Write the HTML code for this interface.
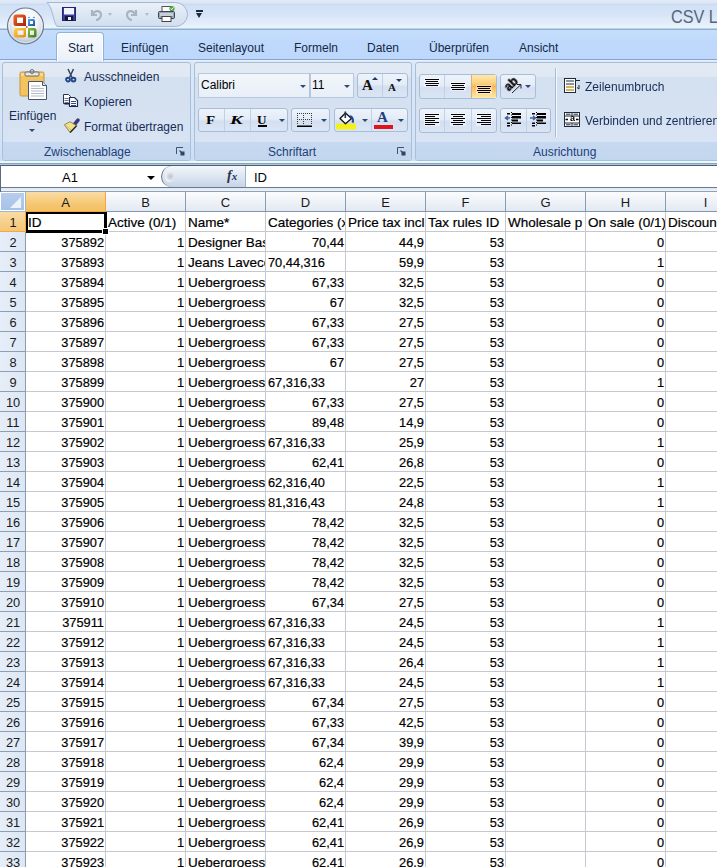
<!DOCTYPE html><html><head><meta charset="utf-8"><style>
*{margin:0;padding:0;box-sizing:border-box}
html,body{width:717px;height:867px;overflow:hidden;background:#fff;font-family:"Liberation Sans",sans-serif;}
.a{position:absolute}
svg{position:absolute;overflow:visible}
.t{position:absolute;white-space:nowrap;font-size:12px;line-height:14px;color:#172c56}
.grp{position:absolute;top:62px;height:99px;border:1px solid #a9bfd9;border-radius:3px;background:linear-gradient(#e2eaf5 0%,#dfe8f3 14%,#d3e0f0 15%,#d6e2f2 60%,#dae6f4 100%)}
.glab{position:absolute;left:0;right:0;bottom:0;height:18px;background:linear-gradient(#c6d9f0,#c2d6ee);border-radius:0 0 2px 2px;text-align:left;font-size:12px;line-height:14px;color:#22407a}
.btn{position:absolute;border:1px solid #a9bdd8;border-radius:3px;background:linear-gradient(#edf3fa 0%,#e4ecf7 45%,#d4e0f1 55%,#dae5f4 100%)}
.dv{position:absolute;width:1px;background:#c0d0e6}
.combo{position:absolute;border:1px solid #b8c9df;background:linear-gradient(#f2f6fb,#e9eff8);}
.cell{position:absolute;height:19px;font-size:13px;line-height:21px;color:#000;white-space:nowrap;overflow:hidden;-webkit-text-stroke:0.2px #000}
.ch{position:absolute;top:192px;height:20px;border-right:1px solid #8b9bb0;border-bottom:1px solid #8696aa;background:linear-gradient(#fbfcfe 0%,#eef2f8 50%,#e3e9f2 100%);text-align:center;font-size:13px;line-height:21px;color:#1a1a1a}
.rh{position:absolute;left:0;width:26px;height:20px;border-right:1px solid #8b9bb0;border-bottom:1px solid #8f9fb3;background:linear-gradient(90deg,#e6eef9,#dde7f4);text-align:center;font-size:12.8px;line-height:22px;color:#1a1a1a;padding-left:1px}
.arr{position:absolute;width:0;height:0;border-left:3px solid transparent;border-right:3px solid transparent;border-top:3px solid #2b4a78}
</style></head><body>
<div class="a" style="left:0;top:0;width:717px;height:30px;background:linear-gradient(#e1eaf7 0px,#dbe6f6 3px,#ccdbf0 4.5px,#d2e1f6 6px,#d8e5f8 16px,#dde9f9 18px,#e3eefb 24px,#e8f4fd 26px,#e9f5fd 28px,#8fafca 29px)"></div>
<div class="t" style="left:671px;top:6px;font-size:18px;line-height:22px;color:#56657a;transform:scaleX(0.9);transform-origin:0 0">CSV L</div>
<svg style="left:0;top:0" width="200" height="30" viewBox="0 0 200 30">
<defs><linearGradient id="qg" x1="0" y1="0" x2="0" y2="1"><stop offset="0" stop-color="#eaf0f8"/><stop offset="0.5" stop-color="#dde7f3"/><stop offset="1" stop-color="#d1deef"/></linearGradient></defs>
<path d="M47 2.5 H175.5 A12 12 0 0 1 175.5 26.5 H57 C53 22, 53 8, 47 2.5z" fill="url(#qg)" stroke="#a3b8d3" stroke-width="1"/>
</svg>
<svg style="left:62px;top:7px" width="14" height="14" viewBox="0 0 14 14">
<rect x="0" y="0" width="14" height="14" fill="#3b3d9c"/><rect x="0.5" y="0.5" width="13" height="13" fill="none" stroke="#23256e"/>
<rect x="2" y="1" width="10" height="6.5" fill="#f2f4fb"/>
<rect x="3" y="9" width="8" height="5" fill="#15163a"/><rect x="6" y="10" width="3" height="3" fill="#e8ecf5"/>
</svg>
<svg style="left:90px;top:8px" width="14" height="13" viewBox="0 0 14 13">
<path d="M2 2 L2 7 L7 7" fill="none" stroke="#a8b4c4" stroke-width="2.2"/>
<path d="M3 6 C5 2, 11 2, 11 7 C11 10, 8 12, 6 12" fill="none" stroke="#a8b4c4" stroke-width="2.2"/>
</svg>
<div class="arr" style="left:108px;top:13px;border-top-color:#b0bccb;border-width:3px 2px 0 2px"></div>
<svg style="left:124px;top:8px" width="14" height="13" viewBox="0 0 14 13">
<path d="M12 2 L12 7 L7 7" fill="none" stroke="#a8b4c4" stroke-width="2.2"/>
<path d="M11 6 C9 2, 3 2, 3 7 C3 10, 6 12, 8 12" fill="none" stroke="#a8b4c4" stroke-width="2.2"/>
</svg>
<div class="arr" style="left:145px;top:13px;border-top-color:#b0bccb;border-width:3px 2px 0 2px"></div>
<svg style="left:158px;top:6px" width="18" height="16" viewBox="0 0 18 16">
<rect x="4" y="0.5" width="9" height="6" fill="#fff" stroke="#555"/>
<rect x="0.5" y="5.5" width="16" height="7" rx="1" fill="#9aa6b6" stroke="#3c4655"/>
<rect x="2" y="7" width="13" height="3" fill="#c8ced9"/>
<rect x="4" y="10.5" width="9" height="5" fill="#fff" stroke="#444"/>
<circle cx="14" cy="2.5" r="2.6" fill="#4aa83a"/><path d="M12.6 2.6 L13.7 3.6 L15.5 1.4" stroke="#fff" stroke-width="1" fill="none"/>
</svg>
<div class="a" style="left:196px;top:10px;width:7px;height:2px;background:#1c2a44"></div>
<div class="arr" style="left:196px;top:13px;border-width:5px 3.5px 0 3.5px;border-top-color:#1c2a44"></div>
<div class="a" style="left:0;top:30px;width:717px;height:30px;background:linear-gradient(#c6defc,#bfd9fc 40%,#bdd8fc);border-bottom:1px solid #87a5c6"></div>
<div class="a" style="left:0;top:60px;width:717px;height:1px;background:#e8f0fa"></div>
<div class="a" style="left:56px;top:32px;width:48px;height:29px;border:1px solid #94b2d6;border-bottom:none;border-radius:4px 4px 0 0;background:linear-gradient(#f7fafe,#f1f5fb 60%,#eaf0f8);box-shadow:inset 1px 1px 0 #ffffff,inset -1px 0 0 #ffffff;z-index:2"></div>
<div class="t" style="left:68px;top:41px;z-index:3;color:#142848">Start</div>
<div class="t" style="left:121px;top:41px;z-index:3;color:#142848">Einfügen</div>
<div class="t" style="left:198px;top:41px;z-index:3;color:#142848">Seitenlayout</div>
<div class="t" style="left:294px;top:41px;z-index:3;color:#142848">Formeln</div>
<div class="t" style="left:367px;top:41px;z-index:3;color:#142848">Daten</div>
<div class="t" style="left:429px;top:41px;z-index:3;color:#142848">Überprüfen</div>
<div class="t" style="left:519px;top:41px;z-index:3;color:#142848">Ansicht</div>
<svg style="left:0;top:0;z-index:5" width="50" height="50" viewBox="0 0 50 50">
<defs>
<radialGradient id="ob" cx="50%" cy="35%" r="65%"><stop offset="0" stop-color="#ffffff"/><stop offset="0.5" stop-color="#f3f5f8"/><stop offset="0.75" stop-color="#d9dee6"/><stop offset="1" stop-color="#aeb8c6"/></radialGradient>
<linearGradient id="lr" x1="0" y1="0" x2="1" y2="1"><stop offset="0" stop-color="#f26a22"/><stop offset="1" stop-color="#a81c0c"/></linearGradient>
<linearGradient id="ly" x1="0" y1="0" x2="1" y2="1"><stop offset="0" stop-color="#ffd24a"/><stop offset="1" stop-color="#e08a10"/></linearGradient>
<linearGradient id="lg" x1="0" y1="0" x2="1" y2="1"><stop offset="0" stop-color="#8cc43a"/><stop offset="1" stop-color="#3a7a1a"/></linearGradient>
<linearGradient id="lb" x1="0" y1="0" x2="1" y2="1"><stop offset="0" stop-color="#5aa8e8"/><stop offset="1" stop-color="#1a4a98"/></linearGradient>
</defs>
<circle cx="25.5" cy="26" r="18" fill="url(#ob)" stroke="#6a7a90" stroke-width="1.1"/>
<circle cx="25.5" cy="26" r="16.5" fill="none" stroke="#ffffff" stroke-width="0.8" opacity="0.7"/>
<path d="M16 14.5 h7 a3 3 0 0 1 3 3 v8.5 h-10 a2.5 2.5 0 0 1 -2.5 -2.5 v-6.5 a2.5 2.5 0 0 1 2.5 -2.5z M17 17.5 v5.5 h6 v-5.5z" fill="url(#lr)" fill-rule="evenodd"/>
<path d="M28 19 h5 a2 2 0 0 1 2 2 v5 h-7z M30 21 v3 h3 v-3z" fill="url(#lb)" fill-rule="evenodd"/>
<path d="M16.5 28 h9.5 v7 a2.5 2.5 0 0 1 -2.5 2.5 h-7 a2.5 2.5 0 0 1 -2.5 -2.5 v-4.5 a2.5 2.5 0 0 1 2.5 -2.5z M17.5 30.5 v4.5 h6 v-4.5z" fill="url(#ly)" fill-rule="evenodd"/>
<path d="M28 28 h6 a2.5 2.5 0 0 1 2.5 2.5 v4.5 a2.5 2.5 0 0 1 -2.5 2.5 h-6z M30 30.5 v4.5 h4 v-4.5z" fill="url(#lg)" fill-rule="evenodd"/>
<circle cx="26.8" cy="27" r="0.9" fill="#c04a20"/><circle cx="29" cy="17.5" r="0.8" fill="#3a7ac0"/><circle cx="34" cy="17.5" r="0.8" fill="#3a7ac0"/>
</svg>
<div class="a" style="left:0;top:61px;width:717px;height:105px;background:linear-gradient(#dbe8f8,#d3e3f6 80%,#c9dcf3)"></div>
<div class="a" style="left:0;top:161px;width:717px;height:2px;background:#e9f9fd"></div>
<div class="a" style="left:0;top:163px;width:717px;height:1px;background:#86a3ba"></div><div class="a" style="left:0;top:164px;width:717px;height:1px;background:#abc6de"></div>
<div class="grp" style="left:2px;width:189px"><div class="glab" style="padding:3px 0 0 41px">Zwischenablage</div></div>
<div class="grp" style="left:194px;width:218px"><div class="glab" style="padding:3px 0 0 73px">Schriftart</div></div>
<div class="grp" style="left:415px;width:310px"><div class="glab" style="padding:3px 0 0 117px">Ausrichtung</div></div>
<svg style="left:176px;top:147px" width="9" height="9" viewBox="0 0 9 9">
<path d="M0.5 7 V0.5 H7" fill="none" stroke="#3f5472" stroke-width="1"/>
<path d="M3.5 3.5 L7 7" stroke="#3f5472" stroke-width="1.2"/>
<rect x="4.5" y="4.5" width="4" height="4" fill="#2f4563"/></svg>
<svg style="left:397px;top:147px" width="9" height="9" viewBox="0 0 9 9">
<path d="M0.5 7 V0.5 H7" fill="none" stroke="#3f5472" stroke-width="1"/>
<path d="M3.5 3.5 L7 7" stroke="#3f5472" stroke-width="1.2"/>
<rect x="4.5" y="4.5" width="4" height="4" fill="#2f4563"/></svg>
<svg style="left:19px;top:69px" width="30" height="32" viewBox="0 0 30 32">
<rect x="1" y="3" width="24" height="24" rx="1.5" fill="#f2c35e" stroke="#c8953a"/>
<rect x="2" y="4" width="22" height="3" fill="#f8d990"/>
<rect x="6" y="3" width="14" height="4" rx="1" fill="#e8e8e8" stroke="#6b6b6b"/>
<circle cx="13" cy="2.5" r="2" fill="none" stroke="#6b6b6b"/>
<path d="M9.5 12.5 H23.5 L27.5 16.5 V30.5 H9.5z" fill="#fff" stroke="#46566e"/>
<path d="M23.5 12.5 V16.5 H27.5" fill="#dde3ec" stroke="#46566e"/>
<path d="M12 17 H21 M12 19.5 H25 M12 22 H25 M12 24.5 H25 M12 27 H25" stroke="#b0bac8" stroke-width="1"/>
</svg>
<div class="t" style="left:9px;top:109px">Einfügen</div>
<div class="arr" style="left:29px;top:129px;border-width:3px 3px 0 3px"></div>
<svg style="left:65px;top:68px" width="12" height="15" viewBox="0 0 12 15">
<path d="M3 1 L7 9.5 M8.5 1 L4.5 9.5" stroke="#34435e" stroke-width="1.5" fill="none"/>
<circle cx="3" cy="11.6" r="1.9" fill="none" stroke="#24448a" stroke-width="1.9"/>
<circle cx="8.5" cy="11.6" r="1.9" fill="none" stroke="#24448a" stroke-width="1.9"/>
</svg>
<div class="t" style="left:84px;top:70px">Ausschneiden</div>
<svg style="left:63px;top:94px" width="16" height="14" viewBox="0 0 16 14">
<path d="M0.5 0.5 H5.5 L7.5 2.5 V9.5 H0.5z" fill="#fff" stroke="#2a3550" stroke-width="1"/>
<path d="M1.5 10 H8" stroke="#111" stroke-width="1"/>
<rect x="1.5" y="4" width="4" height="1" fill="#6a7896"/><rect x="1.5" y="6" width="4" height="1" fill="#6a7896"/><rect x="1.5" y="8" width="4" height="1" fill="#6a7896"/>
<path d="M6.5 3.5 H11.5 L14.5 6.5 V12.5 H6.5z" fill="#fff" stroke="#1c2a5a" stroke-width="1.2"/>
<rect x="8" y="7" width="5" height="1" fill="#3c4c78"/><rect x="8" y="9" width="5" height="1" fill="#3c4c78"/><rect x="8" y="11" width="5" height="1" fill="#3c4c78"/>
</svg>
<div class="t" style="left:84px;top:95px">Kopieren</div>
<svg style="left:63px;top:118px" width="16" height="16" viewBox="0 0 16 16">
<path d="M11.4 6.5 L15 2.2" stroke="#3d3a7a" stroke-width="3.6" stroke-linecap="round"/>
<path d="M1.3 6.8 L7.1 3.7 L13.6 7.7 L7.1 14.5z" fill="#f1e08c" stroke="#807040" stroke-width="0.8"/>
<path d="M13.6 7.7 L7.1 14.5" stroke="#2a2a20" stroke-width="1.4"/>
<path d="M3 7.5 L8 12" stroke="#d8c060" stroke-width="1"/>
</svg>
<div class="t" style="left:84px;top:120px">Format übertragen</div>
<div class="combo" style="left:198px;top:73px;width:112px;height:25px"></div>
<div class="t" style="left:201px;top:78px;color:#000">Calibri</div>
<div class="arr" style="left:300px;top:85px"></div>
<div class="a" style="left:309px;top:73px;width:2px;height:25px;background:#b3c4da"></div>
<div class="combo" style="left:310px;top:73px;width:44px;height:25px"></div>
<div class="t" style="left:312px;top:78px;color:#000">11</div>
<div class="arr" style="left:344px;top:85px"></div>
<div class="btn" style="left:357px;top:73px;width:51px;height:25px"></div><div class="dv" style="left:382px;top:74px;height:23px"></div>
<div class="t" style="left:362px;top:77px;font-family:'Liberation Serif',serif;font-weight:bold;font-size:15px;line-height:16px;color:#111">A</div>
<div class="arr" style="left:372px;top:77px;border-width:0 3px 3px 3px;border-top:none;border-bottom:3px solid #1d3a66"></div>
<div class="t" style="left:388px;top:81px;font-family:'Liberation Serif',serif;font-weight:bold;font-size:11px;line-height:12px;color:#111">A</div>
<div class="arr" style="left:396px;top:79px;border-width:3px 3px 0 3px;border-top-color:#1d3a66"></div>
<div class="btn" style="left:198px;top:108px;width:90px;height:24px"></div><div class="dv" style="left:224px;top:109px;height:22px"></div><div class="dv" style="left:250px;top:109px;height:22px"></div>
<div class="t" style="left:206px;top:113px;font-family:'Liberation Serif',serif;font-weight:bold;font-size:12px;line-height:12px;color:#000;transform:scale(1.25,1.08);transform-origin:0 0">F</div>
<div class="t" style="left:230px;top:113px;font-family:'Liberation Serif',serif;font-weight:bold;font-style:italic;font-size:12px;line-height:12px;color:#000;transform:scale(1.6,1.08);transform-origin:0 0">K</div>
<div class="t" style="left:257px;top:113px;font-family:'Liberation Serif',serif;font-weight:bold;font-size:12px;line-height:12px;color:#000;transform:scale(1.1,1.08);transform-origin:0 0">U</div>
<div class="a" style="left:258px;top:125px;width:9px;height:1.5px;background:#000"></div>
<div class="arr" style="left:279px;top:119px"></div>
<div class="btn" style="left:291px;top:108px;width:39px;height:24px"></div>
<svg style="left:297px;top:113px" width="15" height="15" viewBox="0 0 15 15">
<rect x="0" y="0" width="1" height="1" fill="#3a3a3a"/><rect x="0" y="2" width="1" height="1" fill="#3a3a3a"/><rect x="0" y="4" width="1" height="1" fill="#3a3a3a"/><rect x="0" y="6" width="1" height="1" fill="#3a3a3a"/><rect x="0" y="8" width="1" height="1" fill="#3a3a3a"/><rect x="0" y="10" width="1" height="1" fill="#3a3a3a"/><rect x="2" y="0" width="1" height="1" fill="#3a3a3a"/><rect x="2" y="6" width="1" height="1" fill="#3a3a3a"/><rect x="4" y="0" width="1" height="1" fill="#3a3a3a"/><rect x="4" y="6" width="1" height="1" fill="#3a3a3a"/><rect x="6" y="0" width="1" height="1" fill="#3a3a3a"/><rect x="6" y="2" width="1" height="1" fill="#3a3a3a"/><rect x="6" y="4" width="1" height="1" fill="#3a3a3a"/><rect x="6" y="6" width="1" height="1" fill="#3a3a3a"/><rect x="6" y="8" width="1" height="1" fill="#3a3a3a"/><rect x="6" y="10" width="1" height="1" fill="#3a3a3a"/><rect x="8" y="0" width="1" height="1" fill="#3a3a3a"/><rect x="8" y="6" width="1" height="1" fill="#3a3a3a"/><rect x="10" y="0" width="1" height="1" fill="#3a3a3a"/><rect x="10" y="6" width="1" height="1" fill="#3a3a3a"/><rect x="12" y="0" width="1" height="1" fill="#3a3a3a"/><rect x="12" y="6" width="1" height="1" fill="#3a3a3a"/><rect x="14" y="0" width="1" height="1" fill="#3a3a3a"/><rect x="14" y="2" width="1" height="1" fill="#3a3a3a"/><rect x="14" y="4" width="1" height="1" fill="#3a3a3a"/><rect x="14" y="6" width="1" height="1" fill="#3a3a3a"/><rect x="14" y="8" width="1" height="1" fill="#3a3a3a"/><rect x="14" y="10" width="1" height="1" fill="#3a3a3a"/>
<rect x="0" y="12.5" width="15" height="1.5" fill="#000"/></svg>
<div class="arr" style="left:321px;top:119px"></div>
<div class="btn" style="left:334px;top:108px;width:74px;height:24px"></div><div class="dv" style="left:371px;top:109px;height:22px"></div>
<svg style="left:336px;top:110px" width="22" height="20" viewBox="0 0 22 20">
<rect x="0" y="13.5" width="20" height="6" rx="1" fill="#f5f01c"/>
<path d="M4 8.5 L9.5 3 L15.5 8.5 L9.5 13.8z" fill="#fff" stroke="#111" stroke-width="1.3" stroke-linejoin="round"/>
<path d="M9.3 1.5 V8" stroke="#2a3340" stroke-width="1.6"/>
<path d="M13.8 5.2 C17.5 5.5, 18.8 9.5, 17.6 13.2 L15.6 12.2 C16.2 10, 16 8, 13.8 7.2z" fill="#1f4b9e"/>
</svg>
<div class="arr" style="left:362px;top:119px"></div>
<div class="t" style="left:377px;top:110px;font-family:'Liberation Serif',serif;font-weight:bold;font-size:15px;line-height:15px;color:#1d3f82">A</div>
<div class="a" style="left:374px;top:125px;width:19px;height:4px;background:#e1141a"></div>
<div class="arr" style="left:398px;top:119px"></div>
<div class="btn" style="left:419px;top:74px;width:78px;height:25px"></div>
<div class="a" style="left:471px;top:75px;width:25px;height:23px;background:linear-gradient(#fde9ad 0%,#fbd27e 35%,#f8b65a 50%,#fbd88a 80%,#fde9a8 100%)"></div>
<div class="dv" style="left:444px;top:75px;height:23px"></div><div class="dv" style="left:471px;top:75px;height:23px;background:#d6b27a"></div>
<div class="a" style="left:424px;top:78px;width:16px;height:9px;background:rgba(255,255,255,0.45)"></div>
<div class="a" style="left:425px;top:79px;width:14px;height:1px;background:#000"></div>
<div class="a" style="left:426px;top:81px;width:12px;height:1px;background:#000"></div>
<div class="a" style="left:425px;top:83px;width:14px;height:1px;background:#000"></div>
<div class="a" style="left:426px;top:85px;width:12px;height:1px;background:#000"></div>
<div class="a" style="left:450px;top:82px;width:16px;height:9px;background:rgba(255,255,255,0.45)"></div>
<div class="a" style="left:451px;top:83px;width:14px;height:1px;background:#000"></div>
<div class="a" style="left:452px;top:85px;width:12px;height:1px;background:#000"></div>
<div class="a" style="left:451px;top:87px;width:14px;height:1px;background:#000"></div>
<div class="a" style="left:452px;top:89px;width:12px;height:1px;background:#000"></div>
<div class="a" style="left:476px;top:85px;width:16px;height:9px;background:rgba(255,255,255,0.45)"></div>
<div class="a" style="left:477px;top:86px;width:14px;height:1px;background:#000"></div>
<div class="a" style="left:478px;top:88px;width:12px;height:1px;background:#000"></div>
<div class="a" style="left:477px;top:90px;width:14px;height:1px;background:#000"></div>
<div class="a" style="left:478px;top:92px;width:12px;height:1px;background:#000"></div>
<div class="btn" style="left:500px;top:74px;width:36px;height:25px"></div>
<div class="t" style="left:504px;top:78px;font-family:'Liberation Sans',sans-serif;font-weight:bold;font-size:12px;line-height:12px;color:#000;transform:rotate(-45deg) translateZ(0);transform-origin:50% 50%;-webkit-text-stroke:0.3px #000">ab</div>
<svg style="left:511px;top:83px" width="11" height="11" viewBox="0 0 11 11"><path d="M1 10 L10 1.5 M6 1.5 H10 V5.5" stroke="#222" stroke-width="1" fill="none"/></svg>
<div class="arr" style="left:525px;top:85px"></div>
<div class="btn" style="left:419px;top:108px;width:78px;height:25px"></div><div class="dv" style="left:444px;top:109px;height:23px"></div><div class="dv" style="left:471px;top:109px;height:23px"></div>
<div class="a" style="left:424px;top:113px;width:16px;height:13px;background:rgba(255,255,255,0.45)"></div>
<div class="a" style="left:425px;top:114px;width:14px;height:1px;background:#000"></div>
<div class="a" style="left:425px;top:116px;width:10px;height:1px;background:#000"></div>
<div class="a" style="left:425px;top:118px;width:14px;height:1px;background:#000"></div>
<div class="a" style="left:425px;top:120px;width:10px;height:1px;background:#000"></div>
<div class="a" style="left:425px;top:122px;width:14px;height:1px;background:#000"></div>
<div class="a" style="left:425px;top:124px;width:10px;height:1px;background:#000"></div>
<div class="a" style="left:450px;top:113px;width:16px;height:13px;background:rgba(255,255,255,0.45)"></div>
<div class="a" style="left:451px;top:114px;width:14px;height:1px;background:#000"></div>
<div class="a" style="left:453px;top:116px;width:10px;height:1px;background:#000"></div>
<div class="a" style="left:451px;top:118px;width:14px;height:1px;background:#000"></div>
<div class="a" style="left:453px;top:120px;width:10px;height:1px;background:#000"></div>
<div class="a" style="left:451px;top:122px;width:14px;height:1px;background:#000"></div>
<div class="a" style="left:453px;top:124px;width:10px;height:1px;background:#000"></div>
<div class="a" style="left:476px;top:113px;width:16px;height:13px;background:rgba(255,255,255,0.45)"></div>
<div class="a" style="left:477px;top:114px;width:14px;height:1px;background:#000"></div>
<div class="a" style="left:481px;top:116px;width:10px;height:1px;background:#000"></div>
<div class="a" style="left:477px;top:118px;width:14px;height:1px;background:#000"></div>
<div class="a" style="left:481px;top:120px;width:10px;height:1px;background:#000"></div>
<div class="a" style="left:477px;top:122px;width:14px;height:1px;background:#000"></div>
<div class="a" style="left:481px;top:124px;width:10px;height:1px;background:#000"></div>
<div class="btn" style="left:500px;top:108px;width:51px;height:25px"></div><div class="dv" style="left:526px;top:109px;height:23px"></div>
<svg style="left:505px;top:112px" width="16" height="15" viewBox="0 0 16 15">
<path d="M6.5 0 V15" stroke="#000" stroke-width="1" stroke-dasharray="1 1.5"/>
<rect x="7" y="1" width="9" height="2" fill="#000"/><rect x="7" y="4" width="9" height="2.5" fill="#000"/><rect x="7" y="7.5" width="6" height="2" fill="#000"/><rect x="7" y="10.5" width="9" height="1.5" fill="#000"/>
<rect x="2" y="1" width="3" height="1.5" fill="#000"/><rect x="2" y="10.5" width="3" height="1.5" fill="#000"/><rect x="2" y="13" width="3" height="1.5" fill="#000"/>
<path d="M5 6 H0.5 M3 4 L0.5 6 L3 8" stroke="#3d5fa8" stroke-width="1.5" fill="none"/>
</svg>
<svg style="left:530px;top:112px" width="16" height="15" viewBox="0 0 16 15">
<path d="M6.5 0 V15" stroke="#000" stroke-width="1" stroke-dasharray="1 1.5"/>
<rect x="7" y="1" width="9" height="2" fill="#000"/><rect x="7" y="4" width="9" height="2.5" fill="#000"/><rect x="7" y="7.5" width="6" height="2" fill="#000"/><rect x="7" y="10.5" width="9" height="1.5" fill="#000"/>
<rect x="2" y="1" width="3" height="1.5" fill="#000"/><rect x="2" y="10.5" width="3" height="1.5" fill="#000"/><rect x="2" y="13" width="3" height="1.5" fill="#000"/>
<path d="M0 6 H5 M3 4 L5.5 6 L3 8" stroke="#3d5fa8" stroke-width="1.5" fill="none"/>
</svg>
<div class="a" style="left:555px;top:68px;width:1px;height:69px;background:#a6bcd8"></div><div class="a" style="left:556px;top:68px;width:1px;height:69px;background:#f3f7fc"></div>
<svg style="left:564px;top:78px" width="17" height="16" viewBox="0 0 17 16">
<rect x="0.5" y="0.5" width="11" height="14" fill="#fffef8" stroke="#1f2a3a"/>
<path d="M2 3 H10 M2 6 H10" stroke="#1f2a3a" stroke-width="1"/>
<path d="M2 9 H10 M2 12 H10" stroke="#c49a3a" stroke-width="1.3"/>
<path d="M11 2.5 H16 M15 7 V11 L13 9.5" stroke="#1f2a3a" stroke-width="1" fill="none"/>
</svg>
<div class="t" style="left:585px;top:80px">Zeilenumbruch</div>
<svg style="left:564px;top:112px" width="16" height="15" viewBox="0 0 16 15">
<rect x="0.5" y="0.5" width="15" height="14" fill="#fff" stroke="#1f2a3a"/>
<path d="M0.5 4 H15.5 M0.5 11 H15.5 M8 0.5 V4 M8 11 V14.5 M2 2.2 H6.5 M9.5 2.2 H14 M2 12.8 H6.5 M9.5 12.8 H14" stroke="#1f2a3a" stroke-width="1"/>
<path d="M1.5 7.5 H4 M12 7.5 H14.5" stroke="#000" stroke-width="1.3"/>
</svg>
<div class="t" style="left:570px;top:113px;font-weight:bold;font-size:9px;line-height:10px;color:#000">a</div>
<div class="t" style="left:585px;top:114px">Verbinden und zentrieren</div>
<div class="a" style="left:0;top:165px;width:717px;height:1px;background:#4f5f72"></div>
<div class="a" style="left:0;top:166px;width:717px;height:21px;background:#fff"></div>
<div class="a" style="left:0;top:187px;width:717px;height:1px;background:#6d7a8c"></div>
<div class="a" style="left:0;top:188px;width:717px;height:3px;background:linear-gradient(#dfe7f2,#eef3f9)"></div>
<div class="a" style="left:0;top:191px;width:717px;height:1px;background:#8fa2b8"></div>
<div class="a" style="left:0;top:165px;width:1px;height:27px;background:#5a6b80"></div>
<div class="t" style="left:62px;top:170px;color:#000;font-size:13px;line-height:16px">A1</div>
<div class="arr" style="left:147px;top:176px;border-width:4px 4px 0 4px;border-top-color:#000"></div>
<div class="a" style="left:161px;top:166px;width:85px;height:21px;border-radius:11px 0 0 11px;background:linear-gradient(#f4f7fb 0%,#dfe7f3 45%,#c6d4e9 100%);border:1px solid #5f7089;border-right:1px solid #9fb2cb;border-top:none;border-bottom:none"></div>
<div class="a" style="left:165px;top:171px;width:9px;height:11px;border-radius:50%;background:radial-gradient(circle at 60% 50%,#b9c1cc,#f2f4f8 70%)"></div>
<div class="t" style="left:227px;top:169px;font-family:'Liberation Serif',serif;font-style:italic;font-weight:bold;font-size:14px;line-height:14px;color:#26344c">f<span style="font-size:11px;margin-left:0px">x</span></div>
<div class="t" style="left:254px;top:170px;color:#000;font-size:13px;line-height:16px">ID</div>
<div class="a" style="left:0;top:192px;width:26px;height:20px;background:#fff;border-right:1px solid #9eb6ce;border-bottom:1px solid #9eb6ce"></div>
<div class="a" style="left:1px;top:193px;width:23px;height:17px;background:linear-gradient(#b7cdee,#a6c1e8)"></div>
<svg style="left:9px;top:197px" width="13" height="12" viewBox="0 0 13 12"><path d="M12 0 V11 H1z" fill="#eef3fa"/></svg>
<div class="ch" style="left:26px;width:80px;background:linear-gradient(#f9dca6,#f6c874 60%,#f2bf62);border-right-color:#f2a83f;border-bottom-color:#f2a83f">A</div>
<div class="ch" style="left:106px;width:80px;">B</div>
<div class="ch" style="left:186px;width:80px;">C</div>
<div class="ch" style="left:266px;width:80px;">D</div>
<div class="ch" style="left:346px;width:80px;">E</div>
<div class="ch" style="left:426px;width:80px;">F</div>
<div class="ch" style="left:506px;width:80px;">G</div>
<div class="ch" style="left:586px;width:80px;">H</div>
<div class="ch" style="left:666px;width:80px;">I</div>
<div class="rh" style="top:212px;background:linear-gradient(#f9dca6,#f5c676);border-bottom-color:#f2a83f;border-right-color:#f2a83f">1</div>
<div class="rh" style="top:232px;">2</div>
<div class="rh" style="top:252px;">3</div>
<div class="rh" style="top:272px;">4</div>
<div class="rh" style="top:292px;">5</div>
<div class="rh" style="top:312px;">6</div>
<div class="rh" style="top:332px;">7</div>
<div class="rh" style="top:352px;">8</div>
<div class="rh" style="top:372px;">9</div>
<div class="rh" style="top:392px;">10</div>
<div class="rh" style="top:412px;">11</div>
<div class="rh" style="top:432px;">12</div>
<div class="rh" style="top:452px;">13</div>
<div class="rh" style="top:472px;">14</div>
<div class="rh" style="top:492px;">15</div>
<div class="rh" style="top:512px;">16</div>
<div class="rh" style="top:532px;">17</div>
<div class="rh" style="top:552px;">18</div>
<div class="rh" style="top:572px;">19</div>
<div class="rh" style="top:592px;">20</div>
<div class="rh" style="top:612px;">21</div>
<div class="rh" style="top:632px;">22</div>
<div class="rh" style="top:652px;">23</div>
<div class="rh" style="top:672px;">24</div>
<div class="rh" style="top:692px;">25</div>
<div class="rh" style="top:712px;">26</div>
<div class="rh" style="top:732px;">27</div>
<div class="rh" style="top:752px;">28</div>
<div class="rh" style="top:772px;">29</div>
<div class="rh" style="top:792px;">30</div>
<div class="rh" style="top:812px;">31</div>
<div class="rh" style="top:832px;">32</div>
<div class="rh" style="top:852px;">33</div>
<div class="a" style="left:26px;top:231px;width:691px;height:1px;background:#c5c8ce"></div>
<div class="a" style="left:26px;top:251px;width:691px;height:1px;background:#c5c8ce"></div>
<div class="a" style="left:26px;top:271px;width:691px;height:1px;background:#c5c8ce"></div>
<div class="a" style="left:26px;top:291px;width:691px;height:1px;background:#c5c8ce"></div>
<div class="a" style="left:26px;top:311px;width:691px;height:1px;background:#c5c8ce"></div>
<div class="a" style="left:26px;top:331px;width:691px;height:1px;background:#c5c8ce"></div>
<div class="a" style="left:26px;top:351px;width:691px;height:1px;background:#c5c8ce"></div>
<div class="a" style="left:26px;top:371px;width:691px;height:1px;background:#c5c8ce"></div>
<div class="a" style="left:26px;top:391px;width:691px;height:1px;background:#c5c8ce"></div>
<div class="a" style="left:26px;top:411px;width:691px;height:1px;background:#c5c8ce"></div>
<div class="a" style="left:26px;top:431px;width:691px;height:1px;background:#c5c8ce"></div>
<div class="a" style="left:26px;top:451px;width:691px;height:1px;background:#c5c8ce"></div>
<div class="a" style="left:26px;top:471px;width:691px;height:1px;background:#c5c8ce"></div>
<div class="a" style="left:26px;top:491px;width:691px;height:1px;background:#c5c8ce"></div>
<div class="a" style="left:26px;top:511px;width:691px;height:1px;background:#c5c8ce"></div>
<div class="a" style="left:26px;top:531px;width:691px;height:1px;background:#c5c8ce"></div>
<div class="a" style="left:26px;top:551px;width:691px;height:1px;background:#c5c8ce"></div>
<div class="a" style="left:26px;top:571px;width:691px;height:1px;background:#c5c8ce"></div>
<div class="a" style="left:26px;top:591px;width:691px;height:1px;background:#c5c8ce"></div>
<div class="a" style="left:26px;top:611px;width:691px;height:1px;background:#c5c8ce"></div>
<div class="a" style="left:26px;top:631px;width:691px;height:1px;background:#c5c8ce"></div>
<div class="a" style="left:26px;top:651px;width:691px;height:1px;background:#c5c8ce"></div>
<div class="a" style="left:26px;top:671px;width:691px;height:1px;background:#c5c8ce"></div>
<div class="a" style="left:26px;top:691px;width:691px;height:1px;background:#c5c8ce"></div>
<div class="a" style="left:26px;top:711px;width:691px;height:1px;background:#c5c8ce"></div>
<div class="a" style="left:26px;top:731px;width:691px;height:1px;background:#c5c8ce"></div>
<div class="a" style="left:26px;top:751px;width:691px;height:1px;background:#c5c8ce"></div>
<div class="a" style="left:26px;top:771px;width:691px;height:1px;background:#c5c8ce"></div>
<div class="a" style="left:26px;top:791px;width:691px;height:1px;background:#c5c8ce"></div>
<div class="a" style="left:26px;top:811px;width:691px;height:1px;background:#c5c8ce"></div>
<div class="a" style="left:26px;top:831px;width:691px;height:1px;background:#c5c8ce"></div>
<div class="a" style="left:26px;top:851px;width:691px;height:1px;background:#c5c8ce"></div>
<div class="a" style="left:26px;top:871px;width:691px;height:1px;background:#c5c8ce"></div>
<div class="a" style="left:105px;top:212px;width:1px;height:655px;background:#c5c8ce"></div>
<div class="a" style="left:185px;top:212px;width:1px;height:655px;background:#c5c8ce"></div>
<div class="a" style="left:265px;top:212px;width:1px;height:655px;background:#c5c8ce"></div>
<div class="a" style="left:345px;top:212px;width:1px;height:655px;background:#c5c8ce"></div>
<div class="a" style="left:425px;top:212px;width:1px;height:655px;background:#c5c8ce"></div>
<div class="a" style="left:505px;top:212px;width:1px;height:655px;background:#c5c8ce"></div>
<div class="a" style="left:585px;top:212px;width:1px;height:655px;background:#c5c8ce"></div>
<div class="a" style="left:665px;top:212px;width:1px;height:655px;background:#c5c8ce"></div>
<div class="a" style="left:745px;top:212px;width:1px;height:655px;background:#c5c8ce"></div>
<div class="cell" style="top:212px;left:26px;width:79px;padding-left:2px;font-size:13.5px;line-height:22.5px">ID</div>
<div class="cell" style="top:212px;left:106px;width:79px;padding-left:2px;font-size:13.5px;line-height:22.5px">Active (0/1)</div>
<div class="cell" style="top:212px;left:186px;width:79px;padding-left:2px;font-size:13.5px;line-height:22.5px">Name*</div>
<div class="cell" style="top:212px;left:266px;width:79px;padding-left:2px;font-size:13.5px;line-height:22.5px">Categories (x</div>
<div class="cell" style="top:212px;left:346px;width:79px;padding-left:2px;font-size:13.5px;line-height:22.5px">Price tax incl</div>
<div class="cell" style="top:212px;left:426px;width:79px;padding-left:2px;font-size:13.5px;line-height:22.5px">Tax rules ID</div>
<div class="cell" style="top:212px;left:506px;width:79px;padding-left:2px;font-size:13.5px;line-height:22.5px">Wholesale p</div>
<div class="cell" style="top:212px;left:586px;width:79px;padding-left:2px;font-size:13.5px;line-height:22.5px">On sale (0/1)</div>
<div class="cell" style="top:212px;left:666px;width:79px;padding-left:2px;font-size:13.5px;line-height:22.5px">Discoun</div>
<div class="cell" style="top:232px;left:26px;width:79px;text-align:right;padding-right:1px;font-size:12.8px;line-height:22px">375892</div>
<div class="cell" style="top:232px;left:106px;width:79px;text-align:right;padding-right:1px;font-size:12.8px;line-height:22px">1</div>
<div class="cell" style="top:232px;left:186px;width:79px;padding-left:2px;font-size:13.5px;line-height:22.5px">Designer Bas</div>
<div class="cell" style="top:232px;left:266px;width:79px;text-align:right;padding-right:1px;font-size:12.8px;line-height:22px">70,44</div>
<div class="cell" style="top:232px;left:346px;width:79px;text-align:right;padding-right:1px;font-size:12.8px;line-height:22px">44,9</div>
<div class="cell" style="top:232px;left:426px;width:79px;text-align:right;padding-right:1px;font-size:12.8px;line-height:22px">53</div>
<div class="cell" style="top:232px;left:586px;width:79px;text-align:right;padding-right:1px;font-size:12.8px;line-height:22px">0</div>
<div class="cell" style="top:252px;left:26px;width:79px;text-align:right;padding-right:1px;font-size:12.8px;line-height:22px">375893</div>
<div class="cell" style="top:252px;left:106px;width:79px;text-align:right;padding-right:1px;font-size:12.8px;line-height:22px">1</div>
<div class="cell" style="top:252px;left:186px;width:79px;padding-left:2px;font-size:13.5px;line-height:22.5px">Jeans Lavecc</div>
<div class="cell" style="top:252px;left:266px;width:79px;padding-left:2px;font-size:12.8px;line-height:22px">70,44,316</div>
<div class="cell" style="top:252px;left:346px;width:79px;text-align:right;padding-right:1px;font-size:12.8px;line-height:22px">59,9</div>
<div class="cell" style="top:252px;left:426px;width:79px;text-align:right;padding-right:1px;font-size:12.8px;line-height:22px">53</div>
<div class="cell" style="top:252px;left:586px;width:79px;text-align:right;padding-right:1px;font-size:12.8px;line-height:22px">1</div>
<div class="cell" style="top:272px;left:26px;width:79px;text-align:right;padding-right:1px;font-size:12.8px;line-height:22px">375894</div>
<div class="cell" style="top:272px;left:106px;width:79px;text-align:right;padding-right:1px;font-size:12.8px;line-height:22px">1</div>
<div class="cell" style="top:272px;left:186px;width:79px;padding-left:2px;font-size:13.5px;line-height:22.5px">Uebergroess</div>
<div class="cell" style="top:272px;left:266px;width:79px;text-align:right;padding-right:1px;font-size:12.8px;line-height:22px">67,33</div>
<div class="cell" style="top:272px;left:346px;width:79px;text-align:right;padding-right:1px;font-size:12.8px;line-height:22px">32,5</div>
<div class="cell" style="top:272px;left:426px;width:79px;text-align:right;padding-right:1px;font-size:12.8px;line-height:22px">53</div>
<div class="cell" style="top:272px;left:586px;width:79px;text-align:right;padding-right:1px;font-size:12.8px;line-height:22px">0</div>
<div class="cell" style="top:292px;left:26px;width:79px;text-align:right;padding-right:1px;font-size:12.8px;line-height:22px">375895</div>
<div class="cell" style="top:292px;left:106px;width:79px;text-align:right;padding-right:1px;font-size:12.8px;line-height:22px">1</div>
<div class="cell" style="top:292px;left:186px;width:79px;padding-left:2px;font-size:13.5px;line-height:22.5px">Uebergroess</div>
<div class="cell" style="top:292px;left:266px;width:79px;text-align:right;padding-right:1px;font-size:12.8px;line-height:22px">67</div>
<div class="cell" style="top:292px;left:346px;width:79px;text-align:right;padding-right:1px;font-size:12.8px;line-height:22px">32,5</div>
<div class="cell" style="top:292px;left:426px;width:79px;text-align:right;padding-right:1px;font-size:12.8px;line-height:22px">53</div>
<div class="cell" style="top:292px;left:586px;width:79px;text-align:right;padding-right:1px;font-size:12.8px;line-height:22px">0</div>
<div class="cell" style="top:312px;left:26px;width:79px;text-align:right;padding-right:1px;font-size:12.8px;line-height:22px">375896</div>
<div class="cell" style="top:312px;left:106px;width:79px;text-align:right;padding-right:1px;font-size:12.8px;line-height:22px">1</div>
<div class="cell" style="top:312px;left:186px;width:79px;padding-left:2px;font-size:13.5px;line-height:22.5px">Uebergroess</div>
<div class="cell" style="top:312px;left:266px;width:79px;text-align:right;padding-right:1px;font-size:12.8px;line-height:22px">67,33</div>
<div class="cell" style="top:312px;left:346px;width:79px;text-align:right;padding-right:1px;font-size:12.8px;line-height:22px">27,5</div>
<div class="cell" style="top:312px;left:426px;width:79px;text-align:right;padding-right:1px;font-size:12.8px;line-height:22px">53</div>
<div class="cell" style="top:312px;left:586px;width:79px;text-align:right;padding-right:1px;font-size:12.8px;line-height:22px">0</div>
<div class="cell" style="top:332px;left:26px;width:79px;text-align:right;padding-right:1px;font-size:12.8px;line-height:22px">375897</div>
<div class="cell" style="top:332px;left:106px;width:79px;text-align:right;padding-right:1px;font-size:12.8px;line-height:22px">1</div>
<div class="cell" style="top:332px;left:186px;width:79px;padding-left:2px;font-size:13.5px;line-height:22.5px">Uebergroess</div>
<div class="cell" style="top:332px;left:266px;width:79px;text-align:right;padding-right:1px;font-size:12.8px;line-height:22px">67,33</div>
<div class="cell" style="top:332px;left:346px;width:79px;text-align:right;padding-right:1px;font-size:12.8px;line-height:22px">27,5</div>
<div class="cell" style="top:332px;left:426px;width:79px;text-align:right;padding-right:1px;font-size:12.8px;line-height:22px">53</div>
<div class="cell" style="top:332px;left:586px;width:79px;text-align:right;padding-right:1px;font-size:12.8px;line-height:22px">0</div>
<div class="cell" style="top:352px;left:26px;width:79px;text-align:right;padding-right:1px;font-size:12.8px;line-height:22px">375898</div>
<div class="cell" style="top:352px;left:106px;width:79px;text-align:right;padding-right:1px;font-size:12.8px;line-height:22px">1</div>
<div class="cell" style="top:352px;left:186px;width:79px;padding-left:2px;font-size:13.5px;line-height:22.5px">Uebergroess</div>
<div class="cell" style="top:352px;left:266px;width:79px;text-align:right;padding-right:1px;font-size:12.8px;line-height:22px">67</div>
<div class="cell" style="top:352px;left:346px;width:79px;text-align:right;padding-right:1px;font-size:12.8px;line-height:22px">27,5</div>
<div class="cell" style="top:352px;left:426px;width:79px;text-align:right;padding-right:1px;font-size:12.8px;line-height:22px">53</div>
<div class="cell" style="top:352px;left:586px;width:79px;text-align:right;padding-right:1px;font-size:12.8px;line-height:22px">0</div>
<div class="cell" style="top:372px;left:26px;width:79px;text-align:right;padding-right:1px;font-size:12.8px;line-height:22px">375899</div>
<div class="cell" style="top:372px;left:106px;width:79px;text-align:right;padding-right:1px;font-size:12.8px;line-height:22px">1</div>
<div class="cell" style="top:372px;left:186px;width:79px;padding-left:2px;font-size:13.5px;line-height:22.5px">Uebergroess</div>
<div class="cell" style="top:372px;left:266px;width:79px;padding-left:2px;font-size:12.8px;line-height:22px">67,316,33</div>
<div class="cell" style="top:372px;left:346px;width:79px;text-align:right;padding-right:1px;font-size:12.8px;line-height:22px">27</div>
<div class="cell" style="top:372px;left:426px;width:79px;text-align:right;padding-right:1px;font-size:12.8px;line-height:22px">53</div>
<div class="cell" style="top:372px;left:586px;width:79px;text-align:right;padding-right:1px;font-size:12.8px;line-height:22px">1</div>
<div class="cell" style="top:392px;left:26px;width:79px;text-align:right;padding-right:1px;font-size:12.8px;line-height:22px">375900</div>
<div class="cell" style="top:392px;left:106px;width:79px;text-align:right;padding-right:1px;font-size:12.8px;line-height:22px">1</div>
<div class="cell" style="top:392px;left:186px;width:79px;padding-left:2px;font-size:13.5px;line-height:22.5px">Uebergroess</div>
<div class="cell" style="top:392px;left:266px;width:79px;text-align:right;padding-right:1px;font-size:12.8px;line-height:22px">67,33</div>
<div class="cell" style="top:392px;left:346px;width:79px;text-align:right;padding-right:1px;font-size:12.8px;line-height:22px">27,5</div>
<div class="cell" style="top:392px;left:426px;width:79px;text-align:right;padding-right:1px;font-size:12.8px;line-height:22px">53</div>
<div class="cell" style="top:392px;left:586px;width:79px;text-align:right;padding-right:1px;font-size:12.8px;line-height:22px">0</div>
<div class="cell" style="top:412px;left:26px;width:79px;text-align:right;padding-right:1px;font-size:12.8px;line-height:22px">375901</div>
<div class="cell" style="top:412px;left:106px;width:79px;text-align:right;padding-right:1px;font-size:12.8px;line-height:22px">1</div>
<div class="cell" style="top:412px;left:186px;width:79px;padding-left:2px;font-size:13.5px;line-height:22.5px">Uebergroess</div>
<div class="cell" style="top:412px;left:266px;width:79px;text-align:right;padding-right:1px;font-size:12.8px;line-height:22px">89,48</div>
<div class="cell" style="top:412px;left:346px;width:79px;text-align:right;padding-right:1px;font-size:12.8px;line-height:22px">14,9</div>
<div class="cell" style="top:412px;left:426px;width:79px;text-align:right;padding-right:1px;font-size:12.8px;line-height:22px">53</div>
<div class="cell" style="top:412px;left:586px;width:79px;text-align:right;padding-right:1px;font-size:12.8px;line-height:22px">0</div>
<div class="cell" style="top:432px;left:26px;width:79px;text-align:right;padding-right:1px;font-size:12.8px;line-height:22px">375902</div>
<div class="cell" style="top:432px;left:106px;width:79px;text-align:right;padding-right:1px;font-size:12.8px;line-height:22px">1</div>
<div class="cell" style="top:432px;left:186px;width:79px;padding-left:2px;font-size:13.5px;line-height:22.5px">Uebergroess</div>
<div class="cell" style="top:432px;left:266px;width:79px;padding-left:2px;font-size:12.8px;line-height:22px">67,316,33</div>
<div class="cell" style="top:432px;left:346px;width:79px;text-align:right;padding-right:1px;font-size:12.8px;line-height:22px">25,9</div>
<div class="cell" style="top:432px;left:426px;width:79px;text-align:right;padding-right:1px;font-size:12.8px;line-height:22px">53</div>
<div class="cell" style="top:432px;left:586px;width:79px;text-align:right;padding-right:1px;font-size:12.8px;line-height:22px">1</div>
<div class="cell" style="top:452px;left:26px;width:79px;text-align:right;padding-right:1px;font-size:12.8px;line-height:22px">375903</div>
<div class="cell" style="top:452px;left:106px;width:79px;text-align:right;padding-right:1px;font-size:12.8px;line-height:22px">1</div>
<div class="cell" style="top:452px;left:186px;width:79px;padding-left:2px;font-size:13.5px;line-height:22.5px">Uebergroess</div>
<div class="cell" style="top:452px;left:266px;width:79px;text-align:right;padding-right:1px;font-size:12.8px;line-height:22px">62,41</div>
<div class="cell" style="top:452px;left:346px;width:79px;text-align:right;padding-right:1px;font-size:12.8px;line-height:22px">26,8</div>
<div class="cell" style="top:452px;left:426px;width:79px;text-align:right;padding-right:1px;font-size:12.8px;line-height:22px">53</div>
<div class="cell" style="top:452px;left:586px;width:79px;text-align:right;padding-right:1px;font-size:12.8px;line-height:22px">0</div>
<div class="cell" style="top:472px;left:26px;width:79px;text-align:right;padding-right:1px;font-size:12.8px;line-height:22px">375904</div>
<div class="cell" style="top:472px;left:106px;width:79px;text-align:right;padding-right:1px;font-size:12.8px;line-height:22px">1</div>
<div class="cell" style="top:472px;left:186px;width:79px;padding-left:2px;font-size:13.5px;line-height:22.5px">Uebergroess</div>
<div class="cell" style="top:472px;left:266px;width:79px;padding-left:2px;font-size:12.8px;line-height:22px">62,316,40</div>
<div class="cell" style="top:472px;left:346px;width:79px;text-align:right;padding-right:1px;font-size:12.8px;line-height:22px">22,5</div>
<div class="cell" style="top:472px;left:426px;width:79px;text-align:right;padding-right:1px;font-size:12.8px;line-height:22px">53</div>
<div class="cell" style="top:472px;left:586px;width:79px;text-align:right;padding-right:1px;font-size:12.8px;line-height:22px">1</div>
<div class="cell" style="top:492px;left:26px;width:79px;text-align:right;padding-right:1px;font-size:12.8px;line-height:22px">375905</div>
<div class="cell" style="top:492px;left:106px;width:79px;text-align:right;padding-right:1px;font-size:12.8px;line-height:22px">1</div>
<div class="cell" style="top:492px;left:186px;width:79px;padding-left:2px;font-size:13.5px;line-height:22.5px">Uebergroess</div>
<div class="cell" style="top:492px;left:266px;width:79px;padding-left:2px;font-size:12.8px;line-height:22px">81,316,43</div>
<div class="cell" style="top:492px;left:346px;width:79px;text-align:right;padding-right:1px;font-size:12.8px;line-height:22px">24,8</div>
<div class="cell" style="top:492px;left:426px;width:79px;text-align:right;padding-right:1px;font-size:12.8px;line-height:22px">53</div>
<div class="cell" style="top:492px;left:586px;width:79px;text-align:right;padding-right:1px;font-size:12.8px;line-height:22px">1</div>
<div class="cell" style="top:512px;left:26px;width:79px;text-align:right;padding-right:1px;font-size:12.8px;line-height:22px">375906</div>
<div class="cell" style="top:512px;left:106px;width:79px;text-align:right;padding-right:1px;font-size:12.8px;line-height:22px">1</div>
<div class="cell" style="top:512px;left:186px;width:79px;padding-left:2px;font-size:13.5px;line-height:22.5px">Uebergroess</div>
<div class="cell" style="top:512px;left:266px;width:79px;text-align:right;padding-right:1px;font-size:12.8px;line-height:22px">78,42</div>
<div class="cell" style="top:512px;left:346px;width:79px;text-align:right;padding-right:1px;font-size:12.8px;line-height:22px">32,5</div>
<div class="cell" style="top:512px;left:426px;width:79px;text-align:right;padding-right:1px;font-size:12.8px;line-height:22px">53</div>
<div class="cell" style="top:512px;left:586px;width:79px;text-align:right;padding-right:1px;font-size:12.8px;line-height:22px">0</div>
<div class="cell" style="top:532px;left:26px;width:79px;text-align:right;padding-right:1px;font-size:12.8px;line-height:22px">375907</div>
<div class="cell" style="top:532px;left:106px;width:79px;text-align:right;padding-right:1px;font-size:12.8px;line-height:22px">1</div>
<div class="cell" style="top:532px;left:186px;width:79px;padding-left:2px;font-size:13.5px;line-height:22.5px">Uebergroess</div>
<div class="cell" style="top:532px;left:266px;width:79px;text-align:right;padding-right:1px;font-size:12.8px;line-height:22px">78,42</div>
<div class="cell" style="top:532px;left:346px;width:79px;text-align:right;padding-right:1px;font-size:12.8px;line-height:22px">32,5</div>
<div class="cell" style="top:532px;left:426px;width:79px;text-align:right;padding-right:1px;font-size:12.8px;line-height:22px">53</div>
<div class="cell" style="top:532px;left:586px;width:79px;text-align:right;padding-right:1px;font-size:12.8px;line-height:22px">0</div>
<div class="cell" style="top:552px;left:26px;width:79px;text-align:right;padding-right:1px;font-size:12.8px;line-height:22px">375908</div>
<div class="cell" style="top:552px;left:106px;width:79px;text-align:right;padding-right:1px;font-size:12.8px;line-height:22px">1</div>
<div class="cell" style="top:552px;left:186px;width:79px;padding-left:2px;font-size:13.5px;line-height:22.5px">Uebergroess</div>
<div class="cell" style="top:552px;left:266px;width:79px;text-align:right;padding-right:1px;font-size:12.8px;line-height:22px">78,42</div>
<div class="cell" style="top:552px;left:346px;width:79px;text-align:right;padding-right:1px;font-size:12.8px;line-height:22px">32,5</div>
<div class="cell" style="top:552px;left:426px;width:79px;text-align:right;padding-right:1px;font-size:12.8px;line-height:22px">53</div>
<div class="cell" style="top:552px;left:586px;width:79px;text-align:right;padding-right:1px;font-size:12.8px;line-height:22px">0</div>
<div class="cell" style="top:572px;left:26px;width:79px;text-align:right;padding-right:1px;font-size:12.8px;line-height:22px">375909</div>
<div class="cell" style="top:572px;left:106px;width:79px;text-align:right;padding-right:1px;font-size:12.8px;line-height:22px">1</div>
<div class="cell" style="top:572px;left:186px;width:79px;padding-left:2px;font-size:13.5px;line-height:22.5px">Uebergroess</div>
<div class="cell" style="top:572px;left:266px;width:79px;text-align:right;padding-right:1px;font-size:12.8px;line-height:22px">78,42</div>
<div class="cell" style="top:572px;left:346px;width:79px;text-align:right;padding-right:1px;font-size:12.8px;line-height:22px">32,5</div>
<div class="cell" style="top:572px;left:426px;width:79px;text-align:right;padding-right:1px;font-size:12.8px;line-height:22px">53</div>
<div class="cell" style="top:572px;left:586px;width:79px;text-align:right;padding-right:1px;font-size:12.8px;line-height:22px">0</div>
<div class="cell" style="top:592px;left:26px;width:79px;text-align:right;padding-right:1px;font-size:12.8px;line-height:22px">375910</div>
<div class="cell" style="top:592px;left:106px;width:79px;text-align:right;padding-right:1px;font-size:12.8px;line-height:22px">1</div>
<div class="cell" style="top:592px;left:186px;width:79px;padding-left:2px;font-size:13.5px;line-height:22.5px">Uebergroess</div>
<div class="cell" style="top:592px;left:266px;width:79px;text-align:right;padding-right:1px;font-size:12.8px;line-height:22px">67,34</div>
<div class="cell" style="top:592px;left:346px;width:79px;text-align:right;padding-right:1px;font-size:12.8px;line-height:22px">27,5</div>
<div class="cell" style="top:592px;left:426px;width:79px;text-align:right;padding-right:1px;font-size:12.8px;line-height:22px">53</div>
<div class="cell" style="top:592px;left:586px;width:79px;text-align:right;padding-right:1px;font-size:12.8px;line-height:22px">0</div>
<div class="cell" style="top:612px;left:26px;width:79px;text-align:right;padding-right:1px;font-size:12.8px;line-height:22px">375911</div>
<div class="cell" style="top:612px;left:106px;width:79px;text-align:right;padding-right:1px;font-size:12.8px;line-height:22px">1</div>
<div class="cell" style="top:612px;left:186px;width:79px;padding-left:2px;font-size:13.5px;line-height:22.5px">Uebergroess</div>
<div class="cell" style="top:612px;left:266px;width:79px;padding-left:2px;font-size:12.8px;line-height:22px">67,316,33</div>
<div class="cell" style="top:612px;left:346px;width:79px;text-align:right;padding-right:1px;font-size:12.8px;line-height:22px">24,5</div>
<div class="cell" style="top:612px;left:426px;width:79px;text-align:right;padding-right:1px;font-size:12.8px;line-height:22px">53</div>
<div class="cell" style="top:612px;left:586px;width:79px;text-align:right;padding-right:1px;font-size:12.8px;line-height:22px">1</div>
<div class="cell" style="top:632px;left:26px;width:79px;text-align:right;padding-right:1px;font-size:12.8px;line-height:22px">375912</div>
<div class="cell" style="top:632px;left:106px;width:79px;text-align:right;padding-right:1px;font-size:12.8px;line-height:22px">1</div>
<div class="cell" style="top:632px;left:186px;width:79px;padding-left:2px;font-size:13.5px;line-height:22.5px">Uebergroess</div>
<div class="cell" style="top:632px;left:266px;width:79px;padding-left:2px;font-size:12.8px;line-height:22px">67,316,33</div>
<div class="cell" style="top:632px;left:346px;width:79px;text-align:right;padding-right:1px;font-size:12.8px;line-height:22px">24,5</div>
<div class="cell" style="top:632px;left:426px;width:79px;text-align:right;padding-right:1px;font-size:12.8px;line-height:22px">53</div>
<div class="cell" style="top:632px;left:586px;width:79px;text-align:right;padding-right:1px;font-size:12.8px;line-height:22px">1</div>
<div class="cell" style="top:652px;left:26px;width:79px;text-align:right;padding-right:1px;font-size:12.8px;line-height:22px">375913</div>
<div class="cell" style="top:652px;left:106px;width:79px;text-align:right;padding-right:1px;font-size:12.8px;line-height:22px">1</div>
<div class="cell" style="top:652px;left:186px;width:79px;padding-left:2px;font-size:13.5px;line-height:22.5px">Uebergroess</div>
<div class="cell" style="top:652px;left:266px;width:79px;padding-left:2px;font-size:12.8px;line-height:22px">67,316,33</div>
<div class="cell" style="top:652px;left:346px;width:79px;text-align:right;padding-right:1px;font-size:12.8px;line-height:22px">26,4</div>
<div class="cell" style="top:652px;left:426px;width:79px;text-align:right;padding-right:1px;font-size:12.8px;line-height:22px">53</div>
<div class="cell" style="top:652px;left:586px;width:79px;text-align:right;padding-right:1px;font-size:12.8px;line-height:22px">1</div>
<div class="cell" style="top:672px;left:26px;width:79px;text-align:right;padding-right:1px;font-size:12.8px;line-height:22px">375914</div>
<div class="cell" style="top:672px;left:106px;width:79px;text-align:right;padding-right:1px;font-size:12.8px;line-height:22px">1</div>
<div class="cell" style="top:672px;left:186px;width:79px;padding-left:2px;font-size:13.5px;line-height:22.5px">Uebergroess</div>
<div class="cell" style="top:672px;left:266px;width:79px;padding-left:2px;font-size:12.8px;line-height:22px">67,316,33</div>
<div class="cell" style="top:672px;left:346px;width:79px;text-align:right;padding-right:1px;font-size:12.8px;line-height:22px">24,5</div>
<div class="cell" style="top:672px;left:426px;width:79px;text-align:right;padding-right:1px;font-size:12.8px;line-height:22px">53</div>
<div class="cell" style="top:672px;left:586px;width:79px;text-align:right;padding-right:1px;font-size:12.8px;line-height:22px">1</div>
<div class="cell" style="top:692px;left:26px;width:79px;text-align:right;padding-right:1px;font-size:12.8px;line-height:22px">375915</div>
<div class="cell" style="top:692px;left:106px;width:79px;text-align:right;padding-right:1px;font-size:12.8px;line-height:22px">1</div>
<div class="cell" style="top:692px;left:186px;width:79px;padding-left:2px;font-size:13.5px;line-height:22.5px">Uebergroess</div>
<div class="cell" style="top:692px;left:266px;width:79px;text-align:right;padding-right:1px;font-size:12.8px;line-height:22px">67,34</div>
<div class="cell" style="top:692px;left:346px;width:79px;text-align:right;padding-right:1px;font-size:12.8px;line-height:22px">27,5</div>
<div class="cell" style="top:692px;left:426px;width:79px;text-align:right;padding-right:1px;font-size:12.8px;line-height:22px">53</div>
<div class="cell" style="top:692px;left:586px;width:79px;text-align:right;padding-right:1px;font-size:12.8px;line-height:22px">0</div>
<div class="cell" style="top:712px;left:26px;width:79px;text-align:right;padding-right:1px;font-size:12.8px;line-height:22px">375916</div>
<div class="cell" style="top:712px;left:106px;width:79px;text-align:right;padding-right:1px;font-size:12.8px;line-height:22px">1</div>
<div class="cell" style="top:712px;left:186px;width:79px;padding-left:2px;font-size:13.5px;line-height:22.5px">Uebergroess</div>
<div class="cell" style="top:712px;left:266px;width:79px;text-align:right;padding-right:1px;font-size:12.8px;line-height:22px">67,33</div>
<div class="cell" style="top:712px;left:346px;width:79px;text-align:right;padding-right:1px;font-size:12.8px;line-height:22px">42,5</div>
<div class="cell" style="top:712px;left:426px;width:79px;text-align:right;padding-right:1px;font-size:12.8px;line-height:22px">53</div>
<div class="cell" style="top:712px;left:586px;width:79px;text-align:right;padding-right:1px;font-size:12.8px;line-height:22px">0</div>
<div class="cell" style="top:732px;left:26px;width:79px;text-align:right;padding-right:1px;font-size:12.8px;line-height:22px">375917</div>
<div class="cell" style="top:732px;left:106px;width:79px;text-align:right;padding-right:1px;font-size:12.8px;line-height:22px">1</div>
<div class="cell" style="top:732px;left:186px;width:79px;padding-left:2px;font-size:13.5px;line-height:22.5px">Uebergroess</div>
<div class="cell" style="top:732px;left:266px;width:79px;text-align:right;padding-right:1px;font-size:12.8px;line-height:22px">67,34</div>
<div class="cell" style="top:732px;left:346px;width:79px;text-align:right;padding-right:1px;font-size:12.8px;line-height:22px">39,9</div>
<div class="cell" style="top:732px;left:426px;width:79px;text-align:right;padding-right:1px;font-size:12.8px;line-height:22px">53</div>
<div class="cell" style="top:732px;left:586px;width:79px;text-align:right;padding-right:1px;font-size:12.8px;line-height:22px">0</div>
<div class="cell" style="top:752px;left:26px;width:79px;text-align:right;padding-right:1px;font-size:12.8px;line-height:22px">375918</div>
<div class="cell" style="top:752px;left:106px;width:79px;text-align:right;padding-right:1px;font-size:12.8px;line-height:22px">1</div>
<div class="cell" style="top:752px;left:186px;width:79px;padding-left:2px;font-size:13.5px;line-height:22.5px">Uebergroess</div>
<div class="cell" style="top:752px;left:266px;width:79px;text-align:right;padding-right:1px;font-size:12.8px;line-height:22px">62,4</div>
<div class="cell" style="top:752px;left:346px;width:79px;text-align:right;padding-right:1px;font-size:12.8px;line-height:22px">29,9</div>
<div class="cell" style="top:752px;left:426px;width:79px;text-align:right;padding-right:1px;font-size:12.8px;line-height:22px">53</div>
<div class="cell" style="top:752px;left:586px;width:79px;text-align:right;padding-right:1px;font-size:12.8px;line-height:22px">0</div>
<div class="cell" style="top:772px;left:26px;width:79px;text-align:right;padding-right:1px;font-size:12.8px;line-height:22px">375919</div>
<div class="cell" style="top:772px;left:106px;width:79px;text-align:right;padding-right:1px;font-size:12.8px;line-height:22px">1</div>
<div class="cell" style="top:772px;left:186px;width:79px;padding-left:2px;font-size:13.5px;line-height:22.5px">Uebergroess</div>
<div class="cell" style="top:772px;left:266px;width:79px;text-align:right;padding-right:1px;font-size:12.8px;line-height:22px">62,4</div>
<div class="cell" style="top:772px;left:346px;width:79px;text-align:right;padding-right:1px;font-size:12.8px;line-height:22px">29,9</div>
<div class="cell" style="top:772px;left:426px;width:79px;text-align:right;padding-right:1px;font-size:12.8px;line-height:22px">53</div>
<div class="cell" style="top:772px;left:586px;width:79px;text-align:right;padding-right:1px;font-size:12.8px;line-height:22px">0</div>
<div class="cell" style="top:792px;left:26px;width:79px;text-align:right;padding-right:1px;font-size:12.8px;line-height:22px">375920</div>
<div class="cell" style="top:792px;left:106px;width:79px;text-align:right;padding-right:1px;font-size:12.8px;line-height:22px">1</div>
<div class="cell" style="top:792px;left:186px;width:79px;padding-left:2px;font-size:13.5px;line-height:22.5px">Uebergroess</div>
<div class="cell" style="top:792px;left:266px;width:79px;text-align:right;padding-right:1px;font-size:12.8px;line-height:22px">62,4</div>
<div class="cell" style="top:792px;left:346px;width:79px;text-align:right;padding-right:1px;font-size:12.8px;line-height:22px">29,9</div>
<div class="cell" style="top:792px;left:426px;width:79px;text-align:right;padding-right:1px;font-size:12.8px;line-height:22px">53</div>
<div class="cell" style="top:792px;left:586px;width:79px;text-align:right;padding-right:1px;font-size:12.8px;line-height:22px">0</div>
<div class="cell" style="top:812px;left:26px;width:79px;text-align:right;padding-right:1px;font-size:12.8px;line-height:22px">375921</div>
<div class="cell" style="top:812px;left:106px;width:79px;text-align:right;padding-right:1px;font-size:12.8px;line-height:22px">1</div>
<div class="cell" style="top:812px;left:186px;width:79px;padding-left:2px;font-size:13.5px;line-height:22.5px">Uebergroess</div>
<div class="cell" style="top:812px;left:266px;width:79px;text-align:right;padding-right:1px;font-size:12.8px;line-height:22px">62,41</div>
<div class="cell" style="top:812px;left:346px;width:79px;text-align:right;padding-right:1px;font-size:12.8px;line-height:22px">26,9</div>
<div class="cell" style="top:812px;left:426px;width:79px;text-align:right;padding-right:1px;font-size:12.8px;line-height:22px">53</div>
<div class="cell" style="top:812px;left:586px;width:79px;text-align:right;padding-right:1px;font-size:12.8px;line-height:22px">0</div>
<div class="cell" style="top:832px;left:26px;width:79px;text-align:right;padding-right:1px;font-size:12.8px;line-height:22px">375922</div>
<div class="cell" style="top:832px;left:106px;width:79px;text-align:right;padding-right:1px;font-size:12.8px;line-height:22px">1</div>
<div class="cell" style="top:832px;left:186px;width:79px;padding-left:2px;font-size:13.5px;line-height:22.5px">Uebergroess</div>
<div class="cell" style="top:832px;left:266px;width:79px;text-align:right;padding-right:1px;font-size:12.8px;line-height:22px">62,41</div>
<div class="cell" style="top:832px;left:346px;width:79px;text-align:right;padding-right:1px;font-size:12.8px;line-height:22px">26,9</div>
<div class="cell" style="top:832px;left:426px;width:79px;text-align:right;padding-right:1px;font-size:12.8px;line-height:22px">53</div>
<div class="cell" style="top:832px;left:586px;width:79px;text-align:right;padding-right:1px;font-size:12.8px;line-height:22px">0</div>
<div class="cell" style="top:852px;left:26px;width:79px;text-align:right;padding-right:1px;font-size:12.8px;line-height:22px">375923</div>
<div class="cell" style="top:852px;left:106px;width:79px;text-align:right;padding-right:1px;font-size:12.8px;line-height:22px">1</div>
<div class="cell" style="top:852px;left:186px;width:79px;padding-left:2px;font-size:13.5px;line-height:22.5px">Uebergroess</div>
<div class="cell" style="top:852px;left:266px;width:79px;text-align:right;padding-right:1px;font-size:12.8px;line-height:22px">62,41</div>
<div class="cell" style="top:852px;left:346px;width:79px;text-align:right;padding-right:1px;font-size:12.8px;line-height:22px">26,9</div>
<div class="cell" style="top:852px;left:426px;width:79px;text-align:right;padding-right:1px;font-size:12.8px;line-height:22px">53</div>
<div class="cell" style="top:852px;left:586px;width:79px;text-align:right;padding-right:1px;font-size:12.8px;line-height:22px">0</div>
<div class="a" style="left:26px;top:212px;width:81px;height:21px;border-style:solid;border-color:#000;border-width:2px 3px 3px 2px"></div>
<div class="a" style="left:102px;top:228px;width:7px;height:7px;background:#000;border:1px solid #fff"></div>
</body></html>
